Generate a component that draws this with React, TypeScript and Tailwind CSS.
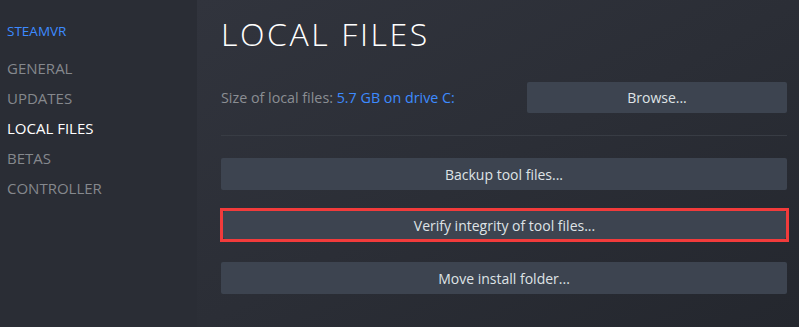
import React from "react";

const navItems = ["GENERAL", "UPDATES", "LOCAL FILES", "BETAS", "CONTROLLER"];

function SteamButton({ label }: { label: string }) {
  return (
    <button className="flex h-full w-full items-center justify-center rounded-[2px] bg-[#3d4450] text-[14px] text-[#dfe3e6]">
      {label}
    </button>
  );
}

export default function App() {
  return (
    <div
      className="flex h-[327px] w-[799px] overflow-hidden bg-gradient-to-r from-[#2c2f37] to-[#25282f]"
      style={{ fontFamily: '"Open Sans", "Noto Sans", sans-serif' }}
    >
      <aside className="h-full w-[197px] shrink-0 bg-[#2a2d35] pl-[7px] pt-[22px]">
        <div className="text-[13.5px] leading-[18px] text-[#3d8bff]">STEAMVR</div>
        <ul className="mt-[19px]">
          {navItems.map((item) => (
            <li
              key={item}
              className={
                item === "LOCAL FILES"
                  ? "h-[30px] text-[15px] leading-[18px] text-white"
                  : "h-[30px] text-[15px] leading-[18px] text-[#85888d]"
              }
            >
              {item}
            </li>
          ))}
        </ul>
      </aside>

      <main className="h-full flex-1 bg-gradient-to-br from-[#31343d] via-[#2b2e36] to-[#24272e] pl-[24px] pr-[12px]">
        <h1 className="mt-[15px] text-[32px] font-light leading-[38px] tracking-[2.6px] text-white">
          LOCAL FILES
        </h1>

        <div className="mt-[29px] flex h-[31px] items-center">
          <div className="flex-1 text-[14.3px] text-[#8b8e93]">
            Size of local files: <span className="text-[#3d8bff]">5.7 GB on drive C:</span>
          </div>
          <div className="h-full w-[260px]">
            <SteamButton label="Browse..." />
          </div>
        </div>

        <div className="mt-[22px] h-px w-full bg-[#383c44]" />

        <div className="mt-[22px] flex flex-col">
          <div className="h-[32px]">
            <SteamButton label="Backup tool files..." />
          </div>
          <div className="mx-[-1px] mr-[-2px] mt-[18px] h-[34px] border-[3px] border-[#f23b3b]">
            <SteamButton label="Verify integrity of tool files..." />
          </div>
          <div className="mt-[20px] h-[32px]">
            <SteamButton label="Move install folder..." />
          </div>
        </div>
      </main>
    </div>
  );
}
